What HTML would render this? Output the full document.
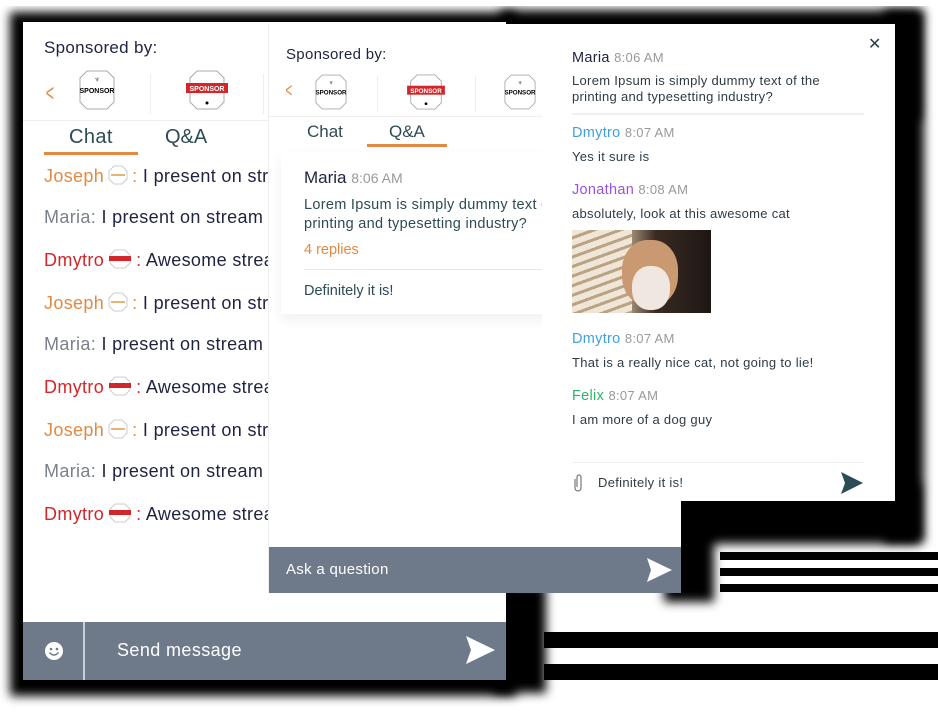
<!DOCTYPE html>
<html><head><meta charset="utf-8"><style>
*{margin:0;padding:0;box-sizing:border-box}
body{width:938px;height:716px;background:#fff;position:relative;overflow:hidden;font-family:"Liberation Sans",sans-serif;color:#1f2340}
.abs{position:absolute}
.sh{position:absolute;background:#000;filter:blur(5px)}
.panel{position:absolute;background:#fff}
.foot{position:absolute;background:#6e7a8a;color:#fff}
.line{position:absolute;left:21px;font-size:18px;white-space:nowrap;color:#1f2340;letter-spacing:.35px}
.o{color:#e28a43}.g{color:#7a808c}.r{color:#d3262b}
.badge{display:inline-block;vertical-align:-3px;margin:0 4px}
.t{color:#999;font-size:13px}
.cl{position:absolute;left:30px;font-size:13px;color:#2d3b45;white-space:nowrap;letter-spacing:.3px}
</style></head><body>
<!-- shadows -->
<div class="sh" style="left:10px;top:12px;width:506px;height:684px"></div>
<div class="sh" style="left:500px;top:10px;width:420px;height:110px"></div>
<div class="sh" style="left:884px;top:10px;width:40px;height:532px"></div>
<div class="sh" style="left:664px;top:484px;width:256px;height:60px"></div>
<div class="sh" style="left:664px;top:484px;width:50px;height:118px"></div>
<div class="sh" style="left:494px;top:585px;width:52px;height:108px"></div>
<div class="abs" style="left:0;top:0;width:938px;height:6px;background:#fff"></div>
<!-- stripes -->
<div class="abs" style="left:720px;top:552px;width:218px;height:8px;background:#000"></div>
<div class="abs" style="left:720px;top:568px;width:218px;height:8px;background:#000"></div>
<div class="abs" style="left:720px;top:584px;width:218px;height:8px;background:#000"></div>
<div class="abs" style="left:544px;top:632px;width:394px;height:16px;background:#000"></div>
<div class="abs" style="left:544px;top:664px;width:394px;height:16px;background:#000"></div>

<!-- Panel A -->
<div class="panel" style="left:23px;top:22px;width:483px;height:658px;overflow:hidden">
  <div class="abs" style="left:21px;top:16px;font-size:17px;color:#1f2340;letter-spacing:.3px">Sponsored by:</div>
  <div class="abs" style="left:20px;top:58px;font-size:24px;color:#e28a43;transform:scaleX(.6)">&lt;</div>
  <svg class="abs" style="left:56px;top:48px" width="36" height="40" viewBox="0 0 36 40"><path d="M8 1h20l7 7v24l-7 7H8l-7-7V8z" fill="#fff" stroke="#aaa"/><text x="18" y="23" font-size="7" font-weight="bold" text-anchor="middle" font-family="Liberation Sans">SPONSOR</text><text x="18" y="12" font-size="8" text-anchor="middle">♆</text></svg>
  <div class="abs" style="left:127px;top:52px;width:1px;height:40px;background:#eee"></div>
  <svg class="abs" style="left:162px;top:48px" width="44" height="40" viewBox="0 0 44 40"><path d="M12 1h20l7 7v24l-7 7H12l-7-7V8z" fill="#fff" stroke="#aaa"/><rect x="1" y="13" width="42" height="10" fill="#d3262b"/><text x="22" y="21" font-size="7" font-weight="bold" fill="#fff" text-anchor="middle" font-family="Liberation Sans">SPONSOR</text><circle cx="22" cy="33" r="1.5"/></svg>
  <div class="abs" style="left:240px;top:52px;width:1px;height:40px;background:#eee"></div>
  <div class="abs" style="left:0;top:98px;width:483px;height:1px;background:#eee"></div>
  <div class="abs" style="left:46px;top:104px;font-size:20px;color:#2d4b55;letter-spacing:.4px">Chat</div>
  <div class="abs" style="left:142px;top:104px;font-size:20px;color:#2d4b55">Q&amp;A</div>
  <div class="abs" style="left:21px;top:130px;width:94px;height:3px;background:#e28a43"></div>
  <div class="line" style="top:143px"><span class="o">Joseph</span><svg class="badge" width="20" height="20"><path d="M6 1h8l5 5v8l-5 5H6l-5-5V6z" fill="#fff" stroke="#ccc"/><rect x="3" y="9" width="14" height="2" fill="#e8b27a"/></svg><span class="o">:</span> I present on stream</div>
  <div class="line" style="top:185px"><span class="g">Maria:</span> I present on stream</div>
  <div class="line" style="top:227px"><span class="r">Dmytro</span><svg class="badge" width="24" height="20"><path d="M7 1h10l5 5v8l-5 5H7l-5-5V6z" fill="#fff" stroke="#ccc"/><rect x="1" y="7" width="22" height="5" fill="#d3262b"/></svg><span class="r">:</span> Awesome stream</div>
  <div class="line" style="top:270px"><span class="o">Joseph</span><svg class="badge" width="20" height="20"><path d="M6 1h8l5 5v8l-5 5H6l-5-5V6z" fill="#fff" stroke="#ccc"/><rect x="3" y="9" width="14" height="2" fill="#e8b27a"/></svg><span class="o">:</span> I present on stream</div>
  <div class="line" style="top:312px"><span class="g">Maria:</span> I present on stream</div>
  <div class="line" style="top:354px"><span class="r">Dmytro</span><svg class="badge" width="24" height="20"><path d="M7 1h10l5 5v8l-5 5H7l-5-5V6z" fill="#fff" stroke="#ccc"/><rect x="1" y="7" width="22" height="5" fill="#d3262b"/></svg><span class="r">:</span> Awesome stream</div>
  <div class="line" style="top:397px"><span class="o">Joseph</span><svg class="badge" width="20" height="20"><path d="M6 1h8l5 5v8l-5 5H6l-5-5V6z" fill="#fff" stroke="#ccc"/><rect x="3" y="9" width="14" height="2" fill="#e8b27a"/></svg><span class="o">:</span> I present on stream</div>
  <div class="line" style="top:439px"><span class="g">Maria:</span> I present on stream</div>
  <div class="line" style="top:481px"><span class="r">Dmytro</span><svg class="badge" width="24" height="20"><path d="M7 1h10l5 5v8l-5 5H7l-5-5V6z" fill="#fff" stroke="#ccc"/><rect x="1" y="7" width="22" height="5" fill="#d3262b"/></svg><span class="r">:</span> Awesome stream</div>
  <div class="foot" style="left:0;top:600px;width:483px;height:58px">
    <div class="abs" style="left:60px;top:0;width:2px;height:58px;background:#c8d0da"></div>
    <svg class="abs" style="left:21px;top:19px" width="20" height="20"><circle cx="10" cy="10" r="9" fill="#fff"/><circle cx="7" cy="8" r="1.3" fill="#6e7a8a"/><circle cx="13" cy="8" r="1.3" fill="#6e7a8a"/><path d="M5.5 11.5q4.5 5 9 0" stroke="#6e7a8a" stroke-width="1.5" fill="none"/></svg>
    <div class="abs" style="left:94px;top:18px;font-size:18px;letter-spacing:.4px">Send message</div>
    <svg class="abs" style="left:441px;top:12px" width="32" height="32"><path d="M2 2L31 16 2 30 7 16z" fill="#fff"/></svg>
  </div>
</div>

<!-- Panel B -->
<div class="panel" style="left:268px;top:24px;width:413px;height:569px;overflow:hidden;border-left:1px solid #eee">
  <div class="abs" style="left:17px;top:22px;font-size:15px;letter-spacing:.3px">Sponsored by:</div>
  <div class="abs" style="left:14px;top:56px;font-size:20px;color:#e28a43;transform:scaleX(.6)">&lt;</div>
  <svg class="abs" style="left:46px;top:50px" width="32" height="36" viewBox="0 0 36 40"><path d="M8 1h20l7 7v24l-7 7H8l-7-7V8z" fill="#fff" stroke="#aaa"/><text x="18" y="23" font-size="7" font-weight="bold" text-anchor="middle" font-family="Liberation Sans">SPONSOR</text><text x="18" y="12" font-size="8" text-anchor="middle">♆</text></svg>
  <div class="abs" style="left:108px;top:52px;width:1px;height:36px;background:#eee"></div>
  <svg class="abs" style="left:137px;top:50px" width="40" height="36" viewBox="0 0 44 40"><path d="M12 1h20l7 7v24l-7 7H12l-7-7V8z" fill="#fff" stroke="#aaa"/><rect x="1" y="13" width="42" height="10" fill="#d3262b"/><text x="22" y="21" font-size="7" font-weight="bold" fill="#fff" text-anchor="middle" font-family="Liberation Sans">SPONSOR</text><circle cx="22" cy="33" r="1.5"/></svg>
  <div class="abs" style="left:206px;top:52px;width:1px;height:36px;background:#eee"></div>
  <svg class="abs" style="left:235px;top:50px" width="32" height="36" viewBox="0 0 36 40"><path d="M8 1h20l7 7v24l-7 7H8l-7-7V8z" fill="#fff" stroke="#aaa"/><text x="18" y="23" font-size="7" font-weight="bold" text-anchor="middle" font-family="Liberation Sans">SPONSOR</text><text x="18" y="12" font-size="8" text-anchor="middle">♆</text></svg>
  <div class="abs" style="left:0;top:92px;width:413px;height:1px;background:#eee"></div>
  <div class="abs" style="left:38px;top:98px;font-size:17px;color:#2d4b55">Chat</div>
  <div class="abs" style="left:120px;top:98px;font-size:17px;color:#2d4b55">Q&amp;A</div>
  <div class="abs" style="left:98px;top:120px;width:80px;height:3px;background:#e28a43"></div>
  <div class="abs" style="left:12px;top:128px;width:410px;height:162px;box-shadow:0 6px 12px rgba(0,0,0,.06)"></div>
  <div class="abs" style="left:35px;top:144px;font-size:17px">Maria <span style="color:#999;font-size:14px">8:06 AM</span></div>
  <div class="abs" style="left:35px;top:172px;font-size:14.5px;color:#2d4b55;line-height:19px;white-space:nowrap;letter-spacing:.3px">Lorem Ipsum is simply dummy text of the<br>printing and typesetting industry?</div>
  <div class="abs" style="left:35px;top:218px;font-size:14.5px;color:#e28a43">4 replies</div>
  <div class="abs" style="left:35px;top:245px;width:380px;height:1px;background:#e8e8e8"></div>
  <div class="abs" style="left:35px;top:259px;font-size:14.5px;color:#2d4b55">Definitely it is!</div>
  <div class="foot" style="left:0;top:523px;width:413px;height:46px">
    <div class="abs" style="left:17px;top:14px;font-size:15px;letter-spacing:.3px">Ask a question</div>
    <svg class="abs" style="left:376px;top:9px" width="28" height="28"><path d="M2 2L27 14 2 26 6 14z" fill="#fff"/></svg>
  </div>
</div>

<!-- Panel C -->
<div class="panel" style="left:542px;top:24px;width:353px;height:477px">
  <div class="abs" style="left:326px;top:10px;font-size:16px;color:#2d3b45">✕</div>
  <div class="cl" style="top:26px;font-size:14.5px;color:#1f2340">Maria <span class="t">8:06 AM</span></div>
  <div class="cl" style="top:49px;line-height:16px">Lorem Ipsum is simply dummy text of the<br>printing and typesetting industry?</div>
  <div class="abs" style="left:30px;top:89px;width:292px;height:2px;background:#f0f0f0"></div>
  <div class="cl" style="top:101px;font-size:14.5px;color:#3fa0db">Dmytro <span class="t">8:07 AM</span></div>
  <div class="cl" style="top:125px">Yes it sure is</div>
  <div class="cl" style="top:158px;font-size:14.5px;color:#9b51e0">Jonathan <span class="t">8:08 AM</span></div>
  <div class="cl" style="top:182px">absolutely, look at this awesome cat</div>
  <div class="abs" style="left:30px;top:206px;width:139px;height:83px;overflow:hidden;background:linear-gradient(90deg,#e2d6c4 0,#cbb79c 35%,#3a2a22 60%,#1d1714 100%)">
    <div class="abs" style="left:0;top:0;width:60px;height:83px;background:repeating-linear-gradient(160deg,#efe6d8 0 6px,#b9a384 6px 9px)"></div>
    <div class="abs" style="left:50px;top:10px;width:56px;height:66px;border-radius:45%;background:#c99a72"></div>
    <div class="abs" style="left:60px;top:36px;width:38px;height:44px;border-radius:45%;background:#efe7e0"></div>
  </div>
  <div class="cl" style="top:307px;font-size:14.5px;color:#3fa0db">Dmytro <span class="t">8:07 AM</span></div>
  <div class="cl" style="top:331px">That is a really nice cat, not going to lie!</div>
  <div class="cl" style="top:364px;font-size:14.5px;color:#2fb36a">Felix <span class="t">8:07 AM</span></div>
  <div class="cl" style="top:388px">I am more of a dog guy</div>
  <div class="abs" style="left:30px;top:438px;width:292px;height:1px;background:#f0f0f0"></div>
  <svg class="abs" style="left:31px;top:449px" width="10" height="20"><path d="M2 6v9a3 3 0 006 0V4a2 2 0 00-4 0v10" stroke="#777" stroke-width="1.2" fill="none"/></svg>
  <div class="cl" style="left:56px;top:451px">Definitely it is!</div>
  <svg class="abs" style="left:298px;top:447px" width="24" height="24"><path d="M1 1L23 12 1 23 5 12z" fill="#2d4b55"/></svg>
</div>
</body></html>
